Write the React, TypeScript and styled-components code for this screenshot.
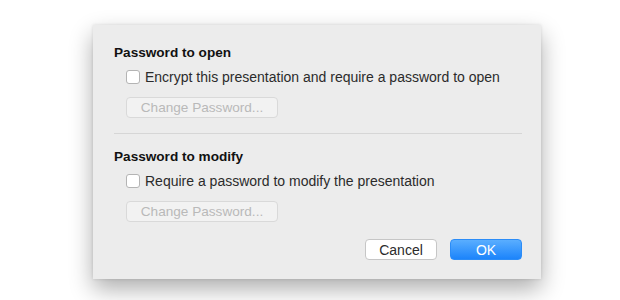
import React from 'react';
import styled, { createGlobalStyle } from 'styled-components';

const GlobalStyle = createGlobalStyle`
    html, body {
        margin: 0;
        padding: 0;
        background: #ffffff;
    }
    body {
        font-family: "Liberation Sans", Arial, sans-serif;
    }
`

const Page = styled.div`
    width: 620px;
    height: 300px;
    padding: 25px 0 0 93px;
    box-sizing: border-box;
`

const Dialog = styled.div`
    width: 448px;
    height: 254px;
    box-sizing: border-box;
    padding: 20px 19px 19px 21px;
    background: #ececec;
    box-shadow: 0 10px 22px rgba(0, 0, 0, 0.32), 0 0 3px rgba(0, 0, 0, 0.12);
    display: flex;
    flex-direction: column;
`

const Section = styled.div`
    display: flex;
    flex-direction: column;
    align-items: flex-start;
`

const Title = styled.div`
    font-size: 13.6px;
    line-height: 16px;
    font-weight: bold;
    color: #111;
`

const CheckRow = styled.label`
    display: flex;
    align-items: center;
    gap: 5px;
    margin: 8px 0 0 12px;
    height: 16px;
    font-size: 14px;
    color: #2b2b2b;
`

const Box = styled.span`
    width: 14px;
    height: 14px;
    box-sizing: border-box;
    background: #fff;
    border: 1px solid #b4b4b4;
    border-radius: 3px;
`

const Button = styled.div<{ variant?: 'disabled' | 'normal' | 'primary' }>`
    display: flex;
    align-items: center;
    justify-content: center;
    height: 21px;
    box-sizing: border-box;
    border-radius: 4px;
    font-size: 14px;
    ${props => props.variant === 'primary' ? `
        background: linear-gradient(#5aaeff, #1c84fb);
        border: 1px solid #2b8cf7;
        color: #fff;
    ` : props.variant === 'disabled' ? `
        background: #f2f2f2;
        border: 1px solid #d9d9d9;
        color: #b9b9b9;
    ` : `
        background: #fff;
        border: 1px solid #c6c6c6;
        color: #2b2b2b;
    `}
`

const ChangeButton = styled(Button)`
    width: 152px;
    margin: 12px 0 0 12px;
    font-size: 13.6px;
`

const Separator = styled.div`
    height: 1px;
    background: #d6d6d6;
    margin: 15px 0 15px 0;
`

const Footer = styled.div`
    display: flex;
    justify-content: flex-end;
    gap: 13px;
    margin-top: 17px;
`

const FooterButton = styled(Button)`
    width: 72px;
`

export default function App() {
    return (
        <>
            <GlobalStyle />
            <Page>
                <Dialog>
                    <Section>
                        <Title>Password to open</Title>
                        <CheckRow>
                            <Box />
                            Encrypt this presentation and require a password to open
                        </CheckRow>
                        <ChangeButton variant="disabled">Change Password...</ChangeButton>
                    </Section>
                    <Separator />
                    <Section>
                        <Title>Password to modify</Title>
                        <CheckRow>
                            <Box />
                            Require a password to modify the presentation
                        </CheckRow>
                        <ChangeButton variant="disabled">Change Password...</ChangeButton>
                    </Section>
                    <Footer>
                        <FooterButton variant="normal">Cancel</FooterButton>
                        <FooterButton variant="primary">OK</FooterButton>
                    </Footer>
                </Dialog>
            </Page>
        </>
    )
}
